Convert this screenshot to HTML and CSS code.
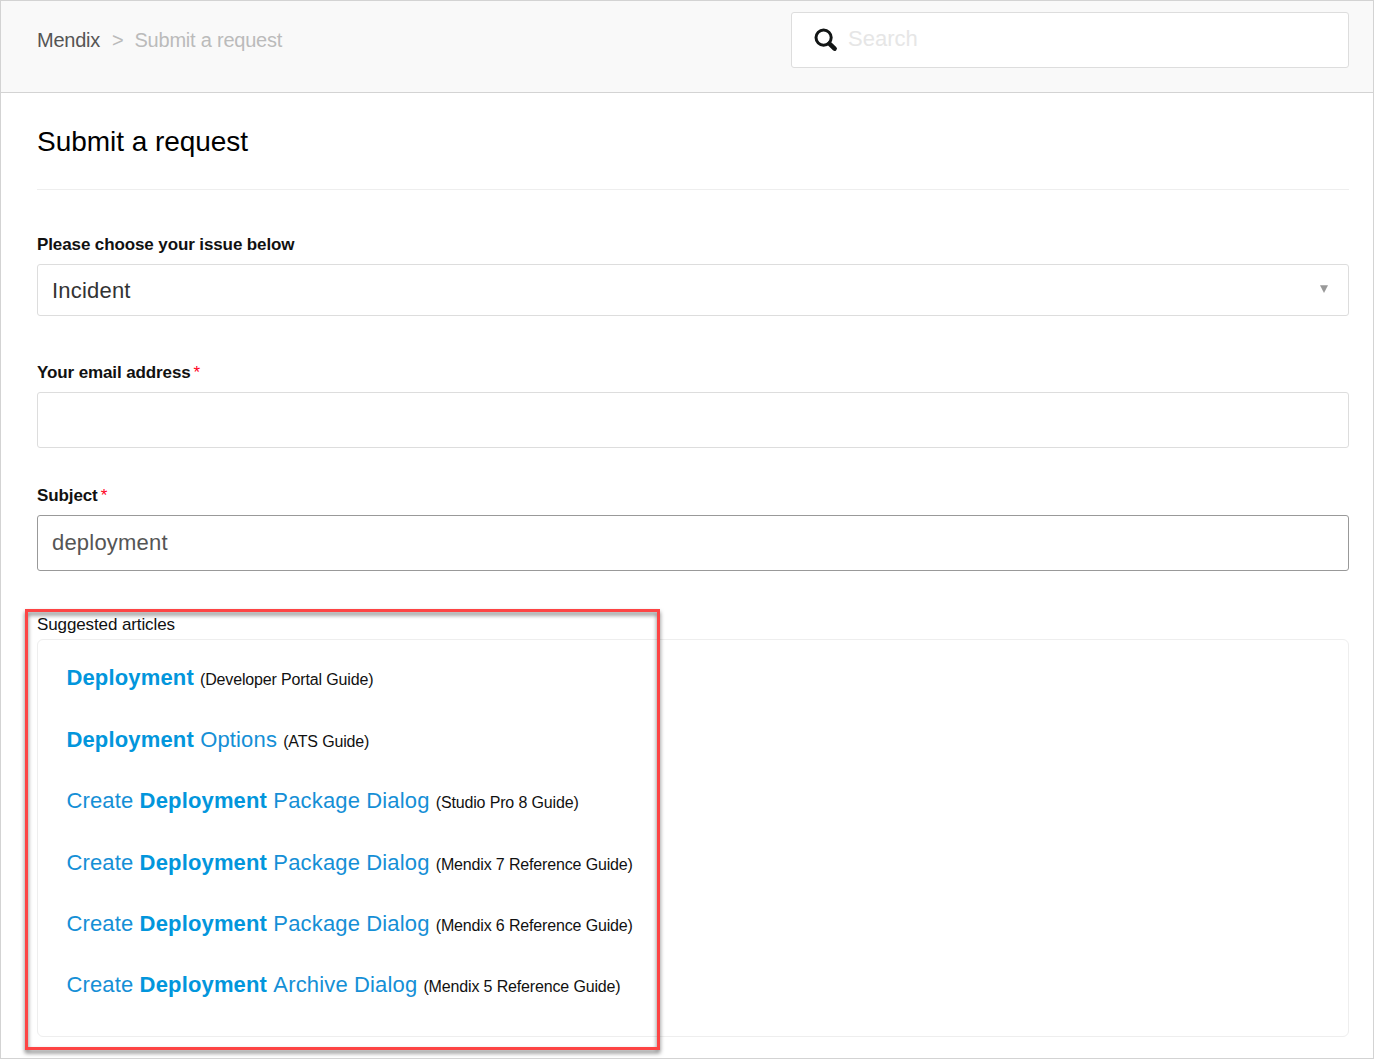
FILE: index.html
```html
<!DOCTYPE html>
<html lang="en">
<head>
<meta charset="utf-8">
<title>Submit a request</title>
<link rel="stylesheet" href="styles.css">
</head>
<body>
<div class="page">
  <header class="header">
    <nav class="breadcrumbs">
      <a class="crumb-home">Mendix</a><span class="crumb-sep">&gt;</span><span class="crumb-current">Submit a request</span>
    </nav>
    <div class="search">
      <svg class="search-icon" width="24" height="24" viewBox="0 0 24 24">
        <circle cx="9.6" cy="9.6" r="7.6" fill="none" stroke="#121515" stroke-width="3"/>
        <path d="M15.4 15.6L20.6 20.6" stroke="#121515" stroke-width="4.6" stroke-linecap="round"/>
      </svg>
      <span class="search-text">Search</span>
    </div>
  </header>
  <main class="content">
    <h1 class="title">Submit a request</h1>
    <div class="field field-issue">
      <div class="label">Please choose your issue below</div>
      <div class="box select"><span>Incident</span>
        <svg width="8" height="8" viewBox="0 0 8 8"><path d="M0 .3H8L4 8Z" fill="#999"/></svg>
      </div>
    </div>
    <div class="field field-email">
      <div class="label">Your email address<span class="required">*</span></div>
      <div class="box"></div>
    </div>
    <div class="field field-subject">
      <div class="label">Subject<span class="required">*</span></div>
      <div class="box focused">deployment</div>
    </div>
    <section class="suggestions">
      <div class="suggestions-title">Suggested articles</div>
      <ul class="articles">
        <li><a><b>Deployment</b></a> <small>(Developer Portal Guide)</small></li>
        <li><a><b>Deployment</b> Options</a> <small>(ATS Guide)</small></li>
        <li><a>Create <b>Deployment</b> Package Dialog</a> <small>(Studio Pro 8 Guide)</small></li>
        <li><a>Create <b>Deployment</b> Package Dialog</a> <small>(Mendix 7 Reference Guide)</small></li>
        <li><a>Create <b>Deployment</b> Package Dialog</a> <small>(Mendix 6 Reference Guide)</small></li>
        <li><a>Create <b>Deployment</b> Archive Dialog</a> <small>(Mendix 5 Reference Guide)</small></li>
      </ul>
      <div class="highlight"></div>
    </section>
  </main>
</div>
</body>
</html>
```
FILE: styles.css
```css
* { box-sizing: border-box; }
body {
  margin: 0;
  background: #fff;
  color: #111;
  font-family: "Liberation Sans", Arial, sans-serif;
}
.page {
  height: 1059px;
  border: 1px solid #d3d3d3;
  overflow: hidden;
}
.header {
  display: flex;
  justify-content: space-between;
  align-items: flex-start;
  height: 92px;
  padding: 11px 24px 0 36px;
  background: #f9f9f9;
  border-bottom: 1px solid #d3d3d3;
}
.breadcrumbs {
  display: flex;
  align-items: center;
  height: 56px;
  font-size: 20px;
  letter-spacing: -0.22px;
  color: #bbb;
}
.crumb-home { color: #555; letter-spacing: -0.25px; }
.crumb-sep { margin: 0 11px 0 12px; }
.search {
  display: flex;
  align-items: center;
  width: 558px;
  height: 56px;
  padding-left: 22px;
  background: #fff;
  border: 1px solid #ddd;
  border-radius: 3px;
}
.search-icon { margin-right: 10px; }
.search-text { padding-bottom: 2px; font-size: 22px; color: #e6e6e6; }
.content { padding: 0 24px 0 36px; }
.title {
  height: 97px;
  margin: 0;
  border-bottom: 1px solid #eee;
  font-size: 28px;
  font-weight: 400;
  line-height: 97px;
  letter-spacing: -0.04px;
  color: #000;
}
.field-issue { padding-top: 45px; }
.field-email { padding-top: 47px; }
.field-subject { padding-top: 38px; }
.label {
  height: 29px;
  font-size: 17px;
  font-weight: 700;
  line-height: 20px;
  letter-spacing: -0.11px;
}
.required { margin-left: 3px; color: #f02; font-weight: 400; }
.box {
  display: flex;
  align-items: center;
  height: 56px;
  padding: 0 14px;
  border: 1px solid #ddd;
  border-radius: 3px;
  font-size: 22px;
  letter-spacing: 0.2px;
  color: #555;
}
.select {
  justify-content: space-between;
  height: 52px;
  padding: 2px 20px 0 14px;
  color: #333;
}
.select svg { margin-bottom: 4px; }
.focused { border-color: #999; }
.suggestions { position: relative; padding-top: 44px; }
.suggestions-title {
  height: 24px;
  font-size: 17px;
  line-height: 20px;
  letter-spacing: -0.11px;
}
.articles {
  height: 398px;
  margin: 0;
  padding: 7.4px 28px 0 28.4px;
  border: 1px solid #eee;
  border-radius: 6px;
  list-style: none;
}
.articles li {
  height: 61.4px;
  line-height: 61.4px;
  font-size: 22px;
  white-space: nowrap;
}
.articles a { color: #158fd6; letter-spacing: 0.15px; font-kerning: none; }
.articles b { color: #0296dc; letter-spacing: 0.16px; }
.articles small { font-size: 16px; letter-spacing: -0.15px; }
.highlight {
  position: absolute;
  left: -12px;
  top: 38px;
  width: 635px;
  height: 441px;
  border: 3px solid #fd4444;
  filter: drop-shadow(0 3px 2.2px rgba(0, 0, 0, 0.55));
}
```
